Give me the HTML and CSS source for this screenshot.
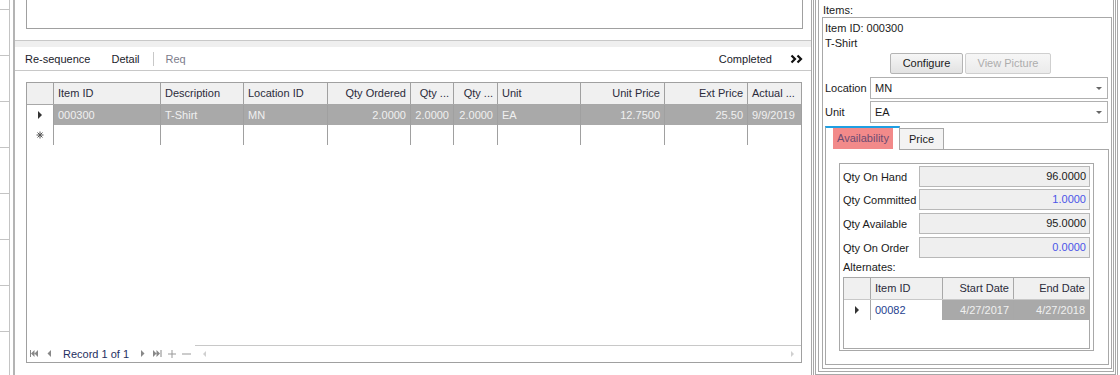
FILE: index.html
```html
<!DOCTYPE html>
<html lang="en">
<head>
  <meta charset="UTF-8">
  <title>Order Lines</title>
  <link rel="stylesheet" href="styles.css">
</head>
<body>

  <div class="rail"></div>

  <div class="main">
    <div class="top-box"></div>
    <div class="splitter"></div>

    <div class="toolbar">
      <span class="tb-item">Re-sequence</span>
      <span class="tb-item tb-detail">Detail</span>
      <span class="tb-sep"></span>
      <span class="tb-item muted">Req</span>
      <span class="tb-spacer"></span>
      <span class="tb-item">Completed</span>
      <svg class="chevrons" width="14" height="10" viewBox="0 0 14 10">
        <path d="M1.5 1.5 L5 5 L1.5 8.5 M7.5 1.5 L11 5 L7.5 8.5" fill="none" stroke="#111" stroke-width="2.2"/>
      </svg>
    </div>

    <div class="grid-wrap">
      <div class="grid">
        <div class="g-row g-head">
          <div></div>
          <div>Item ID</div>
          <div>Description</div>
          <div>Location ID</div>
          <div class="num">Qty Ordered</div>
          <div class="num">Qty ...</div>
          <div class="num">Qty ...</div>
          <div>Unit</div>
          <div class="num">Unit Price</div>
          <div class="num">Ext Price</div>
          <div>Actual ...</div>
        </div>
        <div class="g-row g-sel">
          <div class="ind"><span class="tri"></span></div>
          <div>000300</div>
          <div>T-Shirt</div>
          <div>MN</div>
          <div class="num">2.0000</div>
          <div class="num">2.0000</div>
          <div class="num">2.0000</div>
          <div>EA</div>
          <div class="num">12.7500</div>
          <div class="num">25.50</div>
          <div>9/9/2019</div>
        </div>
        <div class="g-row g-new">
          <div class="ind">
            <svg width="8" height="8" viewBox="0 0 8 8">
              <path d="M4 0.5 V7.5 M0.5 4 H7.5 M1.5 1.5 L6.5 6.5 M6.5 1.5 L1.5 6.5" stroke="#555" stroke-width="1"/>
            </svg>
          </div>
          <div></div><div></div><div></div><div></div><div></div>
          <div></div><div></div><div></div><div></div><div></div>
        </div>
        <div class="g-fill"></div>
        <div class="g-nav">
          <div class="nav-btns">
            <svg class="nav-first" width="8" height="7" viewBox="0 0 8 7"><path d="M0.5 0 V7" stroke="#888"/><path d="M4.5 0 L1 3.5 L4.5 7 Z M8 0 L4.5 3.5 L8 7 Z" fill="#888"/></svg>
            <svg class="nav-prev" width="4" height="7" viewBox="0 0 4 7"><path d="M4 0 L0.5 3.5 L4 7 Z" fill="#888"/></svg>
            <span class="rec">Record 1 of 1</span>
            <svg class="nav-next" width="4" height="7" viewBox="0 0 4 7"><path d="M0 0 L3.5 3.5 L0 7 Z" fill="#888"/></svg>
            <svg class="nav-last" width="9" height="7" viewBox="0 0 9 7"><path d="M0 0 L3.5 3.5 L0 7 Z M3.5 0 L7 3.5 L3.5 7 Z" fill="#888"/><path d="M8 0 V7" stroke="#888"/></svg>
            <svg class="nav-add" width="8" height="8" viewBox="0 0 8 8"><path d="M4 0 V8 M0 4 H8" stroke="#999"/></svg>
            <svg class="nav-del" width="9" height="8" viewBox="0 0 9 8"><path d="M0 4 H9" stroke="#999"/></svg>
          </div>
          <div class="hscroll">
            <svg width="4" height="6" viewBox="0 0 4 6"><path d="M4 0 L1 3 L4 6 Z" fill="#d0d0d0"/></svg>
            <svg width="4" height="6" viewBox="0 0 4 6"><path d="M0 0 L3 3 L0 6 Z" fill="#d0d0d0"/></svg>
          </div>
        </div>
      </div>
    </div>
  </div>

  <div class="side">
    <div class="frame1">
      <div class="frame2">
        <div class="group-label">Items:</div>
        <div class="item-box">
          <div class="line first">Item ID: 000300</div>
          <div class="line">T-Shirt</div>
          <div class="btn-row">
            <span class="btn">Configure</span>
            <span class="btn disabled">View Picture</span>
          </div>
          <div class="combo-row">
            <span class="combo-label">Location</span>
            <div class="combo">MN<span class="arrow"></span></div>
          </div>
          <div class="combo-row unit">
            <span class="combo-label">Unit</span>
            <div class="combo">EA<span class="arrow"></span></div>
          </div>

          <div class="tabs">
            <div class="tab active"><span class="tab-hl">Availability</span></div>
            <div class="tab">Price</div>
          </div>
          <div class="tab-page">
            <div class="avail">
              <div class="field tight"><span class="f-label">Qty On Hand</span><span class="f-val">96.0000</span></div>
              <div class="field"><span class="f-label">Qty Committed</span><span class="f-val blue">1.0000</span></div>
              <div class="field"><span class="f-label">Qty Available</span><span class="f-val">95.0000</span></div>
              <div class="field"><span class="f-label">Qty On Order</span><span class="f-val blue">0.0000</span></div>
              <div class="alt-label">Alternates:</div>
              <div class="alt-grid">
                <div class="a-row a-head">
                  <div></div>
                  <div>Item ID</div>
                  <div class="num">Start Date</div>
                  <div class="num">End Date</div>
                </div>
                <div class="a-row a-data">
                  <div class="ind"><span class="tri"></span></div>
                  <div class="link">00082</div>
                  <div class="num sel">4/27/2017</div>
                  <div class="num sel">4/27/2018</div>
                </div>
              </div>
            </div>
          </div>
        </div>
      </div>
    </div>
  </div>

</body>
</html>
```

FILE: styles.css
```css
body {
  margin: 0;
  width: 1120px;
  height: 375px;
  overflow: hidden;
  display: flex;
  background: #fff;
  color: #222;
  font-family: 'Liberation Sans', Arial, sans-serif;
  font-size: 11px;
}

/* far left strip */
.rail {
  width: 9px;
  height: 375px;
  border-right: 1px solid #c4c4c4;
  margin-right: 3px;
  background: repeating-linear-gradient(to bottom, transparent 0 9px, #c4c4c4 9px 10px, transparent 10px 46px);
}

.main {
  width: 799px;
  height: 375px;
  box-sizing: border-box;
  border-left: 2px solid #b4b4b4;
  border-right: 1px solid #a8a8a8;
  display: flex;
  flex-direction: column;
}
.top-box {
  height: 28px;
  margin: 0 8px 0 11px;
  border: 1px solid #a0a0a0;
  border-top: none;
}
.splitter {
  margin-top: 11px;
  height: 6px;
  border-top: 1px solid #c8c8c8;
  background: #efefef;
}

.toolbar {
  height: 23px;
  border-bottom: 1px solid #c8c8c8;
  display: flex;
  align-items: center;
  padding: 0 7px 0 10px;
}
.tb-item {
  color: #1b1b2b;
}
.tb-detail {
  margin-left: 21px;
}
.tb-sep {
  width: 1px;
  height: 14px;
  background: #c8c8c8;
  margin: 0 12px 0 13px;
}
.muted {
  color: #7c7c8c;
}
.tb-spacer {
  flex: 1;
}
.chevrons {
  margin-left: 18px;
}

.grid-wrap {
  padding: 11px 9px 0 11px;
}
.grid {
  height: 281px;
  box-sizing: border-box;
  border: 1px solid #a0a0a0;
  display: flex;
  flex-direction: column;
}
.g-row {
  display: grid;
  grid-template-columns: 26px 107px 83px 84px 83px 43px 44px 83px 84px 83px 1fr;
  height: 20px;
  line-height: 20px;
}
.g-row > div {
  border-left: 1px solid #a0a0a0;
  padding: 0 4px;
  white-space: nowrap;
  overflow: hidden;
}
.g-row > div:first-child {
  border-left: none;
}
.num {
  text-align: right;
}
.g-head {
  height: 21px;
  line-height: 21px;
  background: #f0f0f0;
  border-bottom: 1px solid #a8a8a8;
  color: #2b2b3b;
}
.g-sel > div {
  background: #a9a9a9;
  color: #f0f0f0;
}
.g-sel > div.ind {
  background: #fff;
}
.ind {
  display: flex;
  align-items: center;
  justify-content: center;
}
.tri {
  width: 0;
  height: 0;
  border-left: 4px solid #333;
  border-top: 4px solid transparent;
  border-bottom: 4px solid transparent;
}
.g-fill {
  flex: 1;
}

.g-nav {
  height: 17px;
  display: flex;
}
.nav-btns {
  width: 168px;
  display: flex;
  align-items: center;
  padding-left: 3px;
  box-sizing: border-box;
}
.nav-prev {
  margin-left: 9px;
}
.rec {
  margin-left: 12px;
  color: #1f2f5f;
}
.nav-next {
  margin-left: 12px;
}
.nav-last {
  margin-left: 8px;
}
.nav-add {
  margin-left: 6px;
}
.nav-del {
  margin-left: 6px;
}
.hscroll {
  flex: 1;
  border-top: 1px solid #c8c8c8;
  display: flex;
  align-items: center;
  justify-content: space-between;
  padding: 0 6px 0 7px;
}

/* right panel */
.side {
  width: 305px;
  height: 375px;
  margin-left: 1px;
  box-sizing: border-box;
  border-left: 1px solid #a8a8a8;
  border-right: 1px solid #a8a8a8;
  padding: 0 1px;
}
.frame1 {
  height: 375px;
  box-sizing: border-box;
  border: 1px solid #a8a8a8;
  border-top: none;
  padding: 0 1px 2px 2px;
  display: flex;
  flex-direction: column;
}
.frame2 {
  flex: 1;
  border: 1px solid #a8a8a8;
  border-top: none;
  padding: 3px 1px 2px 3px;
  display: flex;
  flex-direction: column;
}
.group-label {
  line-height: 14px;
  padding-left: 1px;
  color: #1a1a1a;
}
.item-box {
  flex: 1;
  border: 1px solid #a8a8a8;
  padding: 0 2px 3px 2px;
  display: flex;
  flex-direction: column;
  color: #1a1a1a;
}
.line {
  line-height: 15px;
}
.line.first {
  margin-top: 3px;
}
.btn-row {
  display: flex;
  margin: 2px 0 0 65px;
}
.btn {
  height: 19px;
  line-height: 19px;
  border: 1px solid #b4b4b4;
  border-radius: 2px;
  background: linear-gradient(#f6f6f6, #e2e2e2);
  text-align: center;
  color: #1a1a1a;
  width: 71px;
}
.btn.disabled {
  width: 84px;
  margin-left: 2px;
  color: #adadad;
  border-color: #cfcfcf;
  background: linear-gradient(#f6f6f6, #ebebeb);
}
.combo-row {
  display: flex;
  align-items: center;
  margin-top: 3px;
}
.combo-row.unit {
  margin-top: 2px;
}
.combo-label {
  width: 45px;
}
.combo {
  flex: 1;
  margin-right: 1px;
  height: 20px;
  line-height: 20px;
  border: 1px solid #b0b0b0;
  padding-left: 4px;
  display: flex;
  justify-content: space-between;
  align-items: center;
}
.arrow {
  width: 0;
  height: 0;
  border-top: 3px solid #666;
  border-left: 3px solid transparent;
  border-right: 3px solid transparent;
  margin-right: 5px;
}

.tabs {
  margin-top: 3px;
  height: 23px;
  display: flex;
  align-items: flex-start;
  border-bottom: 1px solid #a8a8a8;
}
.tab {
  box-sizing: border-box;
  height: 21px;
  margin-top: 2px;
  width: 44px;
  border: 1px solid #a8a8a8;
  border-left: none;
  border-bottom: none;
  background: #f3f3f3;
  text-align: center;
  line-height: 21px;
}
.tab.active {
  width: 75px;
  height: 24px;
  margin-top: 0;
  border-left: 1px solid #a8a8a8;
  border-top: 2px solid #1e9fe3;
  background: #fff;
  padding: 0 6px 0 7px;
  position: relative;
  z-index: 1;
}
.tab-hl {
  display: block;
  height: 21px;
  line-height: 20px;
  background: #f28a8a;
  color: #6d4a72;
}

.tab-page {
  flex: 1;
  border: 1px solid #a8a8a8;
  border-top: none;
  padding: 13px 14px 0 13px;
}
.avail {
  border: 1px solid #a8a8a8;
  padding: 2px 3px 1px 3px;
}
.field {
  display: flex;
  align-items: center;
  height: 21px;
  margin-bottom: 3px;
}
.field.tight {
  margin-bottom: 2px;
}
.f-label {
  width: 76px;
}
.f-val {
  flex: 1;
  height: 19px;
  line-height: 19px;
  border: 1px solid #b8b8b8;
  background: #efefef;
  text-align: right;
  padding-right: 3px;
}
.blue {
  color: #4b55e8;
}
.alt-label {
  margin-top: -3px;
  height: 19px;
  line-height: 19px;
}
.alt-grid {
  height: 72px;
  box-sizing: border-box;
  border: 1px solid #a8a8a8;
}
.a-row {
  display: grid;
  grid-template-columns: 26px 72px 71px 1fr;
  height: 20px;
  line-height: 20px;
}
.a-row > div {
  border-left: 1px solid #a8a8a8;
  padding: 0 4px;
  white-space: nowrap;
}
.a-row > div:first-child {
  border-left: none;
}
.a-head {
  height: 21px;
  line-height: 21px;
  background: #f0f0f0;
  border-bottom: 1px solid #c8c8c8;
  color: #2b2b3b;
}
.link {
  color: #1f3f8f;
}
.sel {
  background: #a9a9a9;
  color: #f0f0f0;
}
```
